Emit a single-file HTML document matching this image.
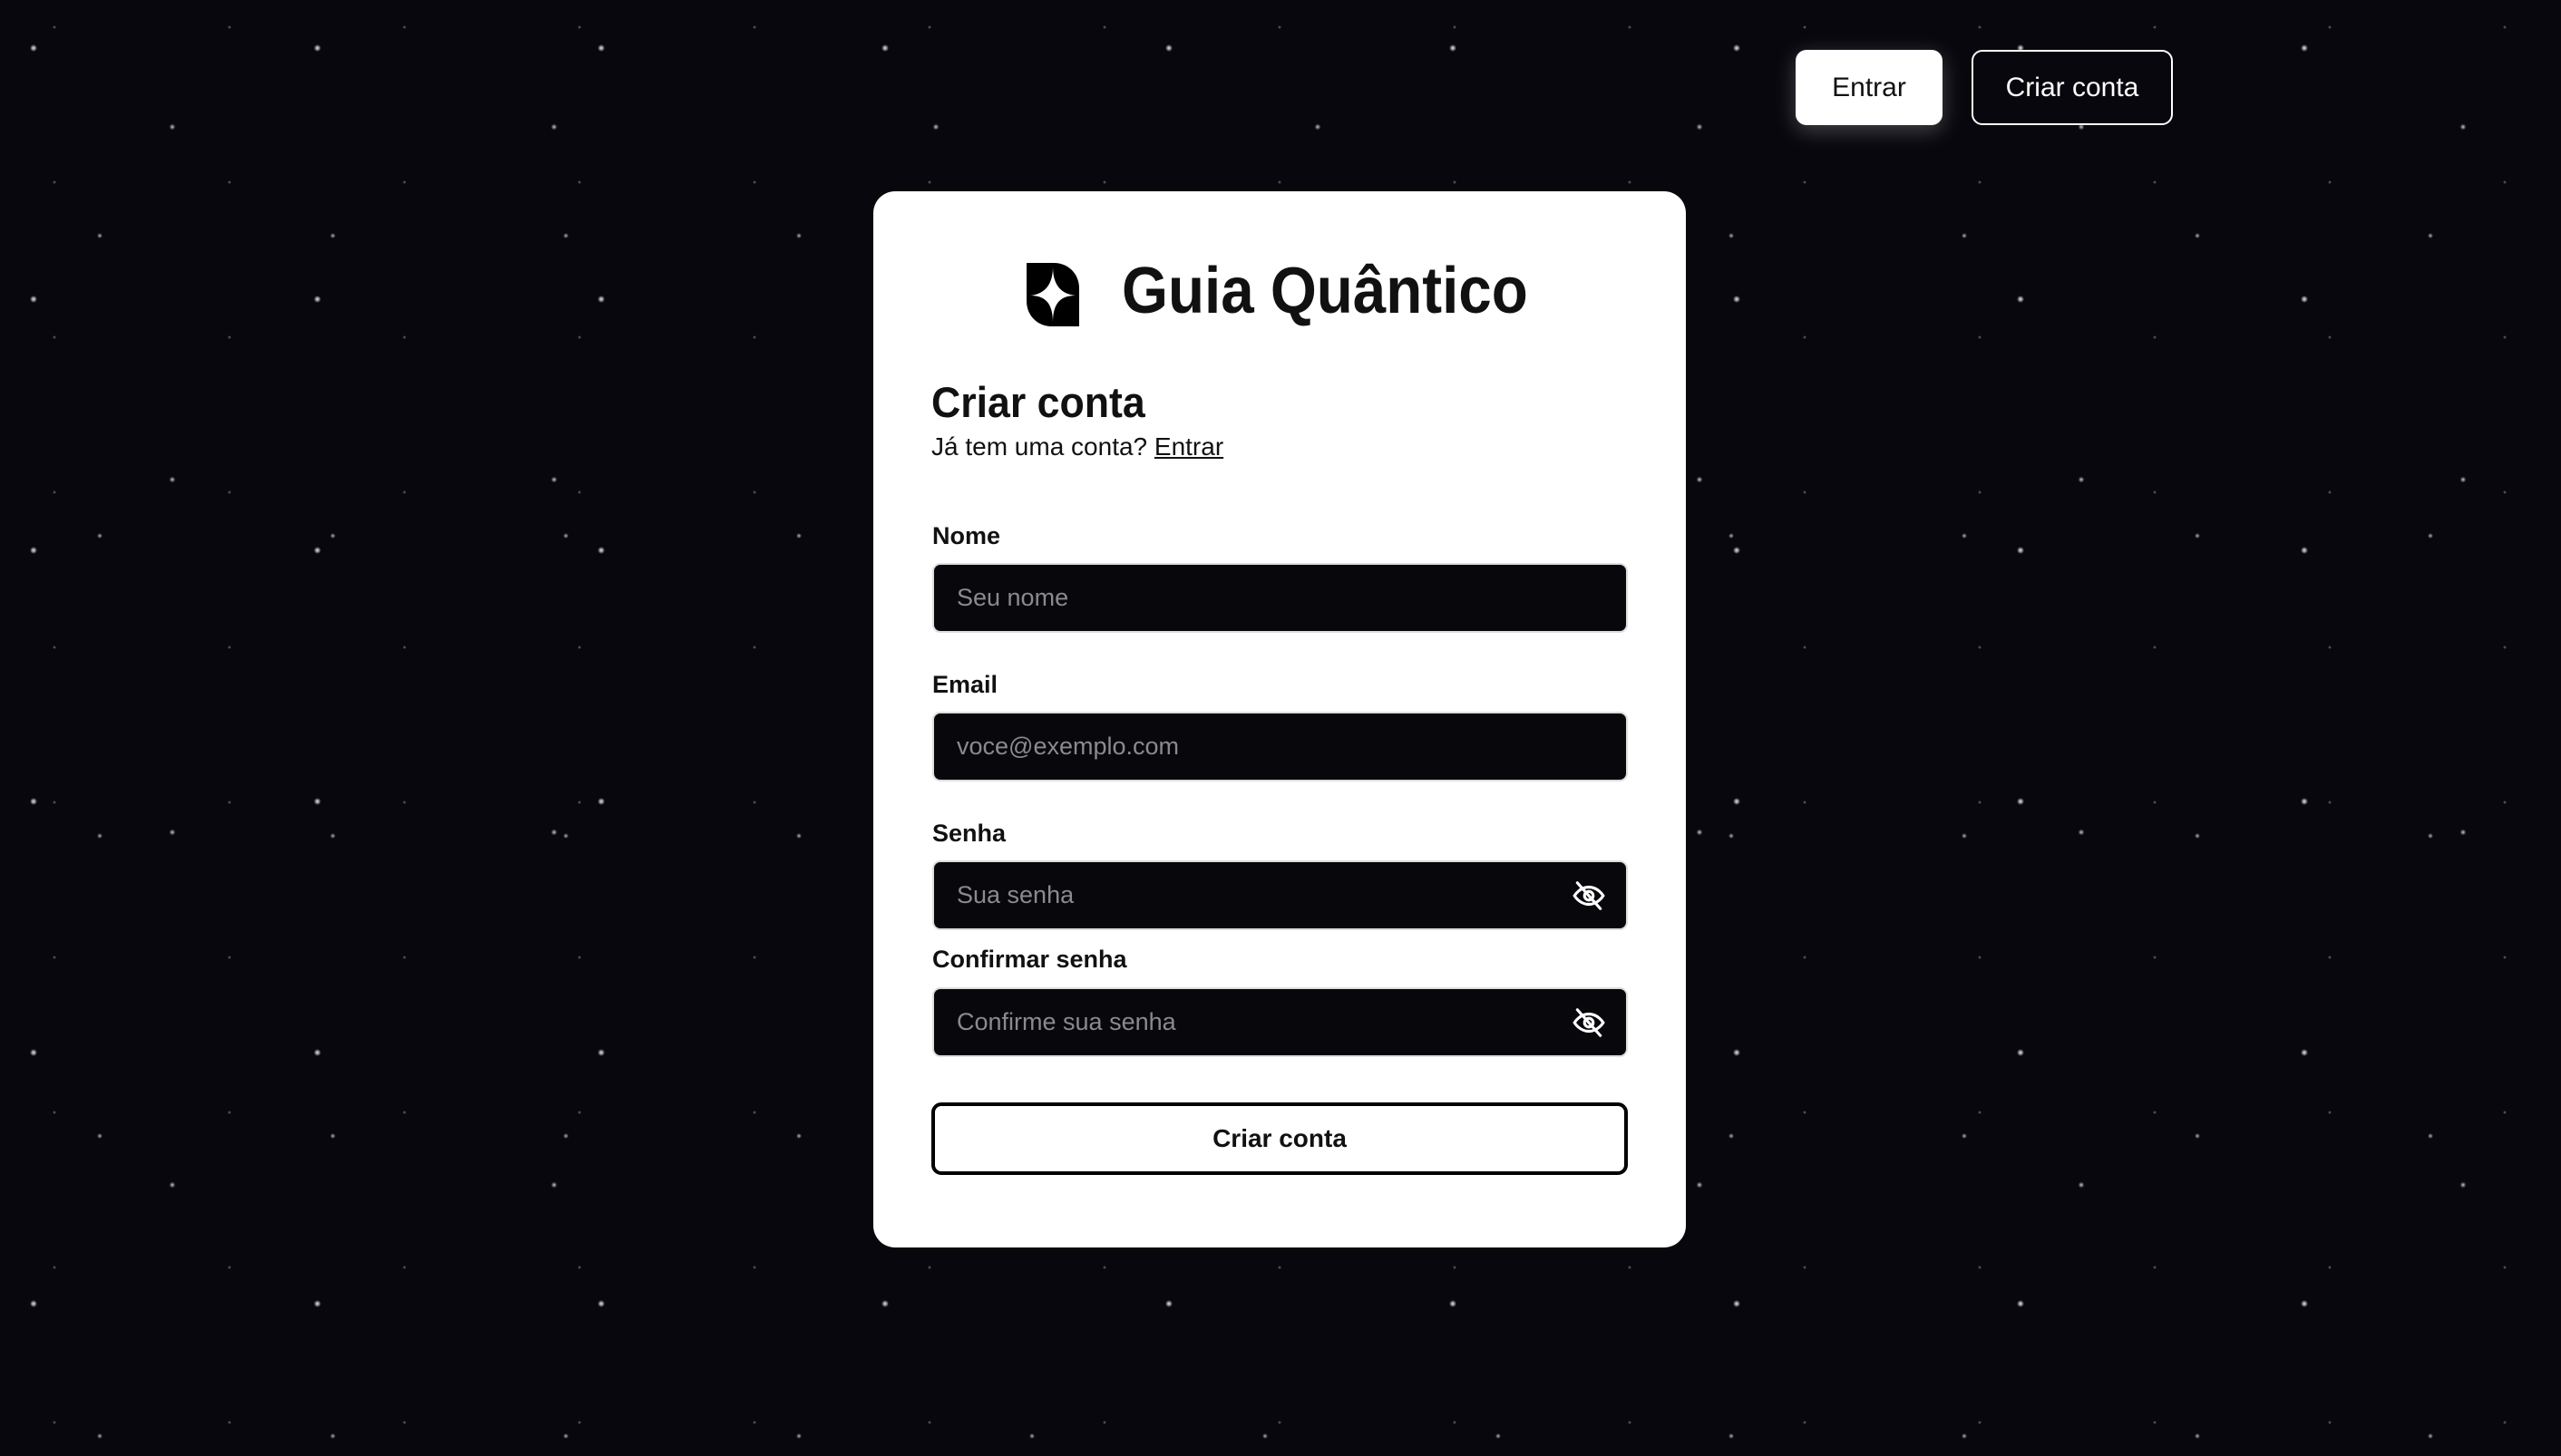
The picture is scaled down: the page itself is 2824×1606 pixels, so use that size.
<!DOCTYPE html>
<html><head><meta charset="utf-8"><style>
*{margin:0;padding:0;box-sizing:border-box}
html,body{width:2824px;height:1606px;overflow:hidden}
body{position:relative;font-family:"Liberation Sans","DejaVu Sans",sans-serif;
background-color:#07070d;
background-image:
radial-gradient(circle at 37px 53px,rgba(255,255,255,.9) 0,rgba(255,255,255,.5) 2px,transparent 4px),
radial-gradient(circle at 190px 140px,rgba(255,255,255,.8) 0,rgba(255,255,255,.3) 2px,transparent 3.5px),
radial-gradient(circle at 110px 260px,rgba(255,255,255,.7) 0,transparent 3px),
radial-gradient(circle at 60px 30px,rgba(255,255,255,.45) 0,transparent 2px);
background-size:313px 277px,421px 389px,257px 331px,193px 171px;}
.abs{position:absolute}
.card{left:963px;top:211px;width:896px;height:1165px;background:#fff;border-radius:24px}
.btn{top:55px;height:83px;border-radius:12px;font-size:30px;display:flex;align-items:center;justify-content:center}
.lbl{left:1028px;font-size:27px;font-weight:bold;color:#111}
.inp{left:1028px;width:767px;height:77px;background:#07070c;border:2px solid #ddd;border-radius:9px;color:#8a8a8f;font-size:27px;padding-left:25px;display:flex;align-items:center}
.eye{position:absolute;right:22px;top:18px}
</style></head><body>
<div class="abs btn" style="left:1980px;width:162px;background:#fff;color:#111;box-shadow:0 6px 24px rgba(255,255,255,.25)">Entrar</div>
<div class="abs btn" style="left:2174px;width:222px;border:2px solid #fff;color:#fff">Criar conta</div>
<div class="abs card"></div>
<svg class="abs" style="left:1132px;top:290px" width="58" height="70" viewBox="0 0 58 70">
<path d="M0 0H30C46 0 58 12 58 28V70H28C12 70 0 58 0 42Z" fill="#000"/>
<path d="M29 4C29 22 22 34 4 36C22 36 29 46 29 66C29 46 36 36 54 36C36 34 29 22 29 4Z" fill="#fff"/>
</svg>
<div class="abs" style="left:1237px;top:280px;font-size:72px;font-weight:bold;color:#111;transform:scaleX(0.91);transform-origin:0 0;white-space:nowrap">Guia Quântico</div>
<div class="abs" style="left:1027px;top:416px;font-size:47px;font-weight:bold;color:#111;transform:scaleX(0.95);transform-origin:0 0">Criar conta</div>
<div class="abs" style="left:1027px;top:477px;font-size:28px;color:#111">Já tem uma conta? <span style="text-decoration:underline">Entrar</span></div>
<div class="abs lbl" style="top:576px">Nome</div>
<div class="abs inp" style="top:621px">Seu nome</div>
<div class="abs lbl" style="top:740px">Email</div>
<div class="abs inp" style="top:785px">voce@exemplo.com</div>
<div class="abs lbl" style="top:904px">Senha</div>
<div class="abs inp" style="top:949px">Sua senha<svg class="eye" width="38" height="38" viewBox="0 0 24 24" fill="none" stroke="#fff" stroke-width="2" stroke-linecap="round"><path d="M2 12s3.5-6 10-6 10 6 10 6-3.5 6-10 6S2 12 2 12Z"/><circle cx="12" cy="12" r="3"/><path d="M4 3l16 18"/></svg></div>
<div class="abs lbl" style="top:1043px">Confirmar senha</div>
<div class="abs inp" style="top:1089px">Confirme sua senha<svg class="eye" width="38" height="38" viewBox="0 0 24 24" fill="none" stroke="#fff" stroke-width="2" stroke-linecap="round"><path d="M2 12s3.5-6 10-6 10 6 10 6-3.5 6-10 6S2 12 2 12Z"/><circle cx="12" cy="12" r="3"/><path d="M4 3l16 18"/></svg></div>
<div class="abs" style="left:1027px;top:1216px;width:768px;height:80px;border:4px solid #000;border-radius:11px;display:flex;align-items:center;justify-content:center;font-size:28px;font-weight:bold;color:#111">Criar conta</div>
</body></html>
